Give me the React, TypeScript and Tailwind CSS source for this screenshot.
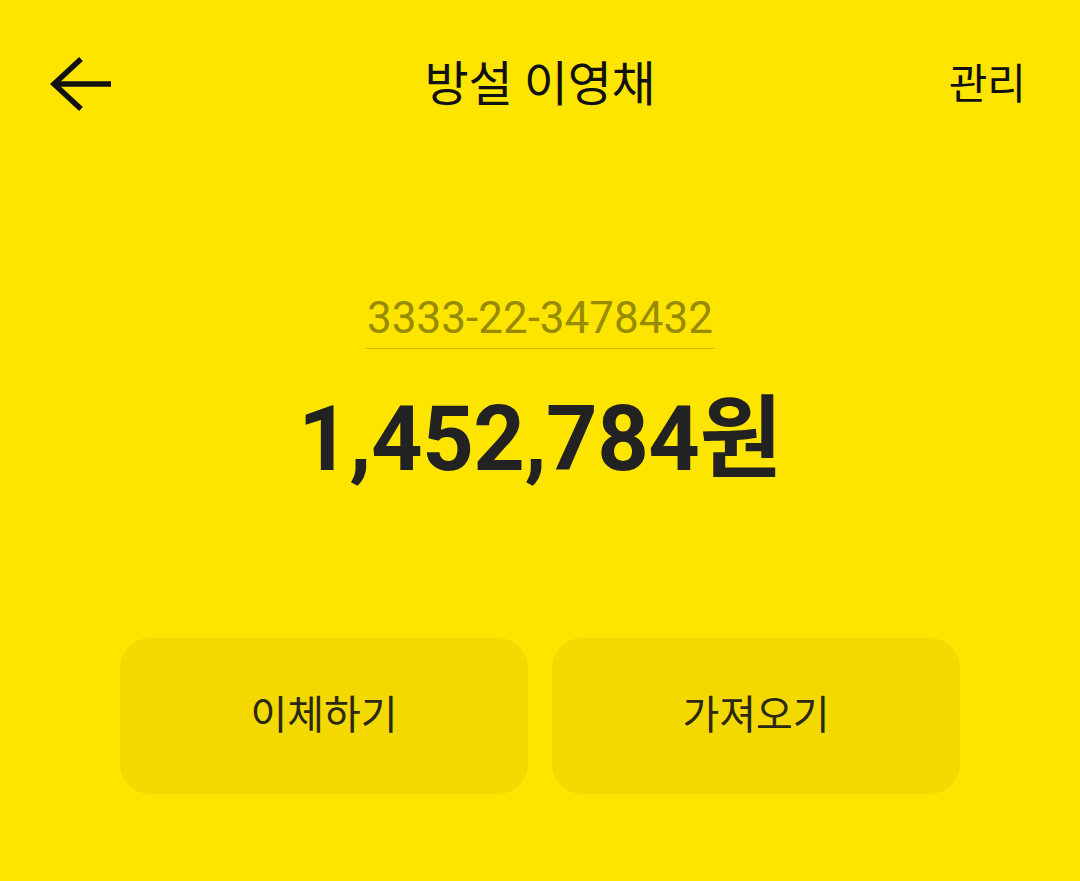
export default function App() {
  return (
    <div
      className="flex h-[881px] w-[1080px] flex-col bg-[#fee500] text-[#111]"
      style={{ fontFamily: "Roboto, 'Noto Sans CJK KR', sans-serif" }}
    >
      <header className="relative flex h-[168px] items-start justify-center pt-[57px]">
        <button className="absolute left-[50px] top-[56px]">
          <svg width="62" height="56" viewBox="0 0 62 56" fill="none" stroke="#111" strokeWidth="5.5">
            <path d="M31 3 L4 28 L31 53" />
            <path d="M4 28 H61" />
          </svg>
        </button>
        <h1 className="text-[48px] leading-[56px] font-normal tracking-[-0.3px]">방설 이영채</h1>
        <span className="absolute right-[54px] top-[60px] text-[42px] leading-[50px]">관리</span>
      </header>

      <main className="flex flex-col items-center">
        <div className="mt-[124px] border-b border-[#cbb800] px-[1px] pb-[4px] text-[44px] leading-[52px] text-[#988b00]">
          3333-22-3478432
        </div>
        <div className="mt-[46px] text-[90px] leading-none font-bold tracking-[-0.5px] text-[#222]">
          1,452,784원
        </div>
      </main>

      <div className="mt-[153px] grid grid-cols-2 gap-[24px] px-[120px]">
        <button className="flex h-[156px] items-center justify-center rounded-[30px] bg-[#f3d900] text-[40px] text-[#2b2914]">
          이체하기
        </button>
        <button className="flex h-[156px] items-center justify-center rounded-[30px] bg-[#f3d900] text-[40px] text-[#2b2914]">
          가져오기
        </button>
      </div>
    </div>
  );
}
